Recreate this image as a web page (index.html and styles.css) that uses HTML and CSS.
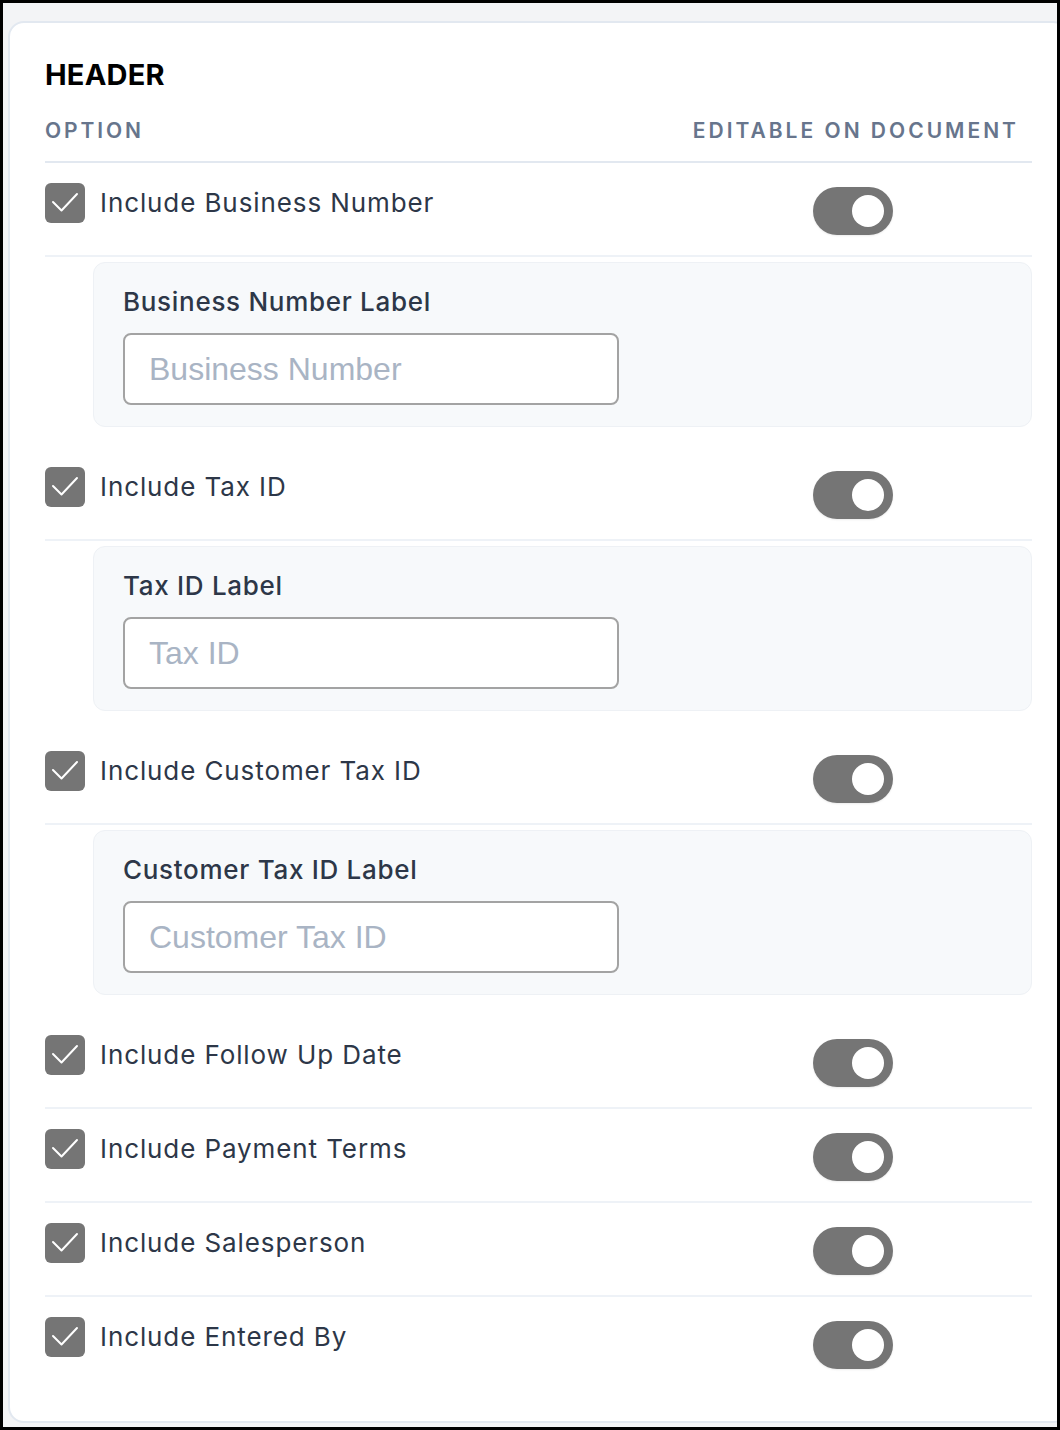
FILE: index.html
```html
<!DOCTYPE html>
<html lang="en">
<head>
  <meta charset="UTF-8">
  <meta name="viewport" content="width=device-width, initial-scale=1.0">
  <title>Header Settings</title>
  <link rel="stylesheet" href="styles.css">
</head>
<body>
  <div class="frame">
    <div class="settings-card" id="header_settings">
      <h2 class="settings-card__title">HEADER</h2>

      <div class="settings-table__head">
        <div class="settings-table__col">Option</div>
        <div class="settings-table__col settings-table__col--right">Editable on document</div>
      </div>

      <div class="settings-row">
        <label class="settings-row__option">
          <span class="check-box"><svg viewBox="0 0 40 40"><path d="M8 19 L16.5 27.5 L32 11"/></svg></span>
          <span class="settings-row__text">Include Business Number</span>
        </label>
        <div class="settings-row__toggle"><span class="toggle"><span class="toggle__knob"></span></span></div>
      </div>
      <div class="settings-panel">
        <div class="settings-panel__label">Business Number Label</div>
        <input class="settings-panel__input" type="text" placeholder="Business Number">
      </div>

      <div class="settings-row">
        <label class="settings-row__option">
          <span class="check-box"><svg viewBox="0 0 40 40"><path d="M8 19 L16.5 27.5 L32 11"/></svg></span>
          <span class="settings-row__text">Include Tax ID</span>
        </label>
        <div class="settings-row__toggle"><span class="toggle"><span class="toggle__knob"></span></span></div>
      </div>
      <div class="settings-panel">
        <div class="settings-panel__label">Tax ID Label</div>
        <input class="settings-panel__input" type="text" placeholder="Tax ID">
      </div>

      <div class="settings-row">
        <label class="settings-row__option">
          <span class="check-box"><svg viewBox="0 0 40 40"><path d="M8 19 L16.5 27.5 L32 11"/></svg></span>
          <span class="settings-row__text">Include Customer Tax ID</span>
        </label>
        <div class="settings-row__toggle"><span class="toggle"><span class="toggle__knob"></span></span></div>
      </div>
      <div class="settings-panel">
        <div class="settings-panel__label">Customer Tax ID Label</div>
        <input class="settings-panel__input" type="text" placeholder="Customer Tax ID">
      </div>

      <div class="settings-row">
        <label class="settings-row__option">
          <span class="check-box"><svg viewBox="0 0 40 40"><path d="M8 19 L16.5 27.5 L32 11"/></svg></span>
          <span class="settings-row__text">Include Follow Up Date</span>
        </label>
        <div class="settings-row__toggle"><span class="toggle"><span class="toggle__knob"></span></span></div>
      </div>

      <div class="settings-row">
        <label class="settings-row__option">
          <span class="check-box"><svg viewBox="0 0 40 40"><path d="M8 19 L16.5 27.5 L32 11"/></svg></span>
          <span class="settings-row__text">Include Payment Terms</span>
        </label>
        <div class="settings-row__toggle"><span class="toggle"><span class="toggle__knob"></span></span></div>
      </div>

      <div class="settings-row">
        <label class="settings-row__option">
          <span class="check-box"><svg viewBox="0 0 40 40"><path d="M8 19 L16.5 27.5 L32 11"/></svg></span>
          <span class="settings-row__text">Include Salesperson</span>
        </label>
        <div class="settings-row__toggle"><span class="toggle"><span class="toggle__knob"></span></span></div>
      </div>

      <div class="settings-row settings-row--last">
        <label class="settings-row__option">
          <span class="check-box"><svg viewBox="0 0 40 40"><path d="M8 19 L16.5 27.5 L32 11"/></svg></span>
          <span class="settings-row__text">Include Entered By</span>
        </label>
        <div class="settings-row__toggle"><span class="toggle"><span class="toggle__knob"></span></span></div>
      </div>
    </div>
  </div>
</body>
</html>
```

FILE: styles.css
```css
/* Page frame */
body {
  margin: 0;
  font-family: Inter, "Noto Sans", sans-serif;
}

.frame {
  height: 1430px;
  box-sizing: border-box;
  border: 3px solid #000;
  background: #f3f4f6;
  padding: 18px 0 0 5px;
  overflow: hidden;
}

/* Card */
#header_settings.settings-card {
  background: #fff;
  border: 2px solid #e2e8f0;
  border-radius: 16px;
  padding: 34px 35px 32px 35px;
  margin-right: -12px;
}

#header_settings .settings-card__title {
  margin: 0 0 26px;
  font-size: 29px;
  line-height: 35px;
  font-weight: 700;
  letter-spacing: 0.2px;
  color: #000;
}

/* Table head */
#header_settings .settings-table__head {
  display: grid;
  grid-template-columns: 1fr 340px;
  padding: 0 16px 18px 0;
  border-bottom: 2px solid #e2e8f0;
}

#header_settings .settings-table__col {
  font-size: 21px;
  line-height: 25px;
  font-weight: 600;
  letter-spacing: 2.9px;
  text-transform: uppercase;
  color: #67758c;
}

#header_settings .settings-table__col--right {
  text-align: right;
  letter-spacing: 3px;
  margin-right: -3px;
}

/* Rows */
#header_settings .settings-row {
  display: grid;
  grid-template-columns: 1fr 324px;
  padding: 20px 16px 20px 0;
  border-bottom: 2px solid #eef2f7;
}

#header_settings .settings-row--last {
  border-bottom: 0;
}

#header_settings .settings-row__option {
  display: flex;
  align-items: flex-start;
  gap: 15px;
  cursor: pointer;
}

#header_settings .settings-row__text {
  font-size: 26px;
  line-height: 40px;
  letter-spacing: 0.9px;
  color: #2d3748;
}

#header_settings .check-box {
  flex: 0 0 40px;
  width: 40px;
  height: 40px;
  border-radius: 6px;
  background: #757575;
}

#header_settings .check-box svg {
  display: block;
  width: 40px;
  height: 40px;
  fill: none;
  stroke: #fff;
  stroke-width: 2;
  stroke-linecap: round;
  stroke-linejoin: round;
}

#header_settings .settings-row__toggle {
  display: flex;
  justify-content: center;
  padding: 4px 2px 0 0;
}

#header_settings .toggle {
  display: flex;
  align-items: center;
  justify-content: flex-end;
  width: 80px;
  height: 48px;
  padding: 0 9px;
  box-sizing: border-box;
  border-radius: 24px;
  background: #757575;
  box-shadow: 0 1px 2px rgba(0,0,0,.08);
}

#header_settings .toggle__knob {
  width: 32px;
  height: 32px;
  border-radius: 50%;
  background: #fff;
}

/* Expanded label panel */
#header_settings .settings-panel {
  margin: 5px 0 20px 48px;
  padding: 21px 29px 21px;
  background: #f7f9fb;
  border: 1px solid #eef1f5;
  border-radius: 12px;
}

#header_settings .settings-panel__label {
  font-size: 26px;
  line-height: 36px;
  font-weight: 500;
  letter-spacing: 0.7px;
  color: #2d3748;
  margin-bottom: 13px;
}

#header_settings .settings-panel__input {
  display: block;
  width: 496px;
  height: 72px;
  box-sizing: border-box;
  padding: 0 24px;
  border: 2px solid #a3a3a3;
  border-radius: 8px;
  background: #fff;
  font-family: "Liberation Sans", Arial, sans-serif;
  font-size: 32px;
  color: #2d3748;
  outline: 0;
}

#header_settings .settings-panel__input::placeholder {
  color: #a9b4c4;
}
```
